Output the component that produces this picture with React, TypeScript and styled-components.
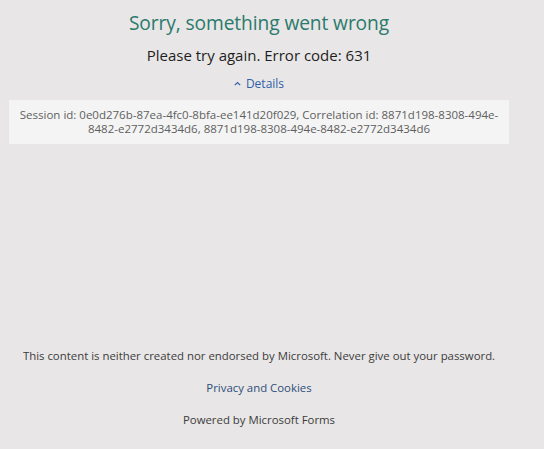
import React from 'react';
import styled, { createGlobalStyle } from 'styled-components';

const GlobalStyle = createGlobalStyle`
  html, body {
    margin: 0;
    padding: 0;
    background: #e8e6e6;
    font-family: "Open Sans", "Noto Sans", sans-serif;
  }
`;

const Page = styled.div`
  width: 500px;
  margin-left: 9px;
  height: 449px;
  display: flex;
  flex-direction: column;
  align-items: center;
`;

const Title = styled.h1`
  margin: 10px 0 0;
  font-size: 19.2px;
  font-weight: 400;
  line-height: 26px;
  color: #2b7a6c;
  letter-spacing: -0.1px;
`;

const Subtitle = styled.div`
  margin-top: 9px;
  font-size: 15px;
  line-height: 20px;
  color: #1e1e1e;
`;

const DetailsToggle = styled.a`
  margin-top: 10px;
  font-size: 12px;
  line-height: 17px;
  color: #2f5faa;
  display: flex;
  align-items: center;
  gap: 5px;
  cursor: pointer;
`;

const Chevron = styled.svg`
  width: 7px;
  height: 5px;
`;

const DetailsBox = styled.div`
  align-self: stretch;
  margin-top: 8px;
  background: #f4f4f4;
  padding: 8px 10px 8px;
  font-size: 11.5px;
  line-height: 14px;
  color: #5f5f5f;
  text-align: center;
`;

const Footer = styled.div`
  margin-top: auto;
  margin-bottom: 21px;
  display: flex;
  flex-direction: column;
  align-items: center;
  gap: 15px;
  font-size: 11.4px;
  line-height: 17px;
  color: #3c3c3c;
`;

const FooterLink = styled.a`
  color: #2d4e7a;
  cursor: pointer;
`;

const App: React.FC = () => (
  <>
    <GlobalStyle />
    <Page>
      <Title>Sorry, something went wrong</Title>
      <Subtitle>Please try again. Error code: 631</Subtitle>
      <DetailsToggle>
        <Chevron viewBox="0 0 7 5">
          <path d="M0.8 4.2 L3.5 1.5 L6.2 4.2" fill="none" stroke="#2f5faa" strokeWidth="1.2" />
        </Chevron>
        Details
      </DetailsToggle>
      <DetailsBox>
        Session id: 0e0d276b-87ea-4fc0-8bfa-ee141d20f029, Correlation id: 8871d198-8308-494e-8482-e2772d3434d6, 8871d198-8308-494e-8482-e2772d3434d6
      </DetailsBox>
      <Footer>
        <div>This content is neither created nor endorsed by Microsoft. Never give out your password.</div>
        <FooterLink>Privacy and Cookies</FooterLink>
        <div>Powered by Microsoft Forms</div>
      </Footer>
    </Page>
  </>
);

export default App;
